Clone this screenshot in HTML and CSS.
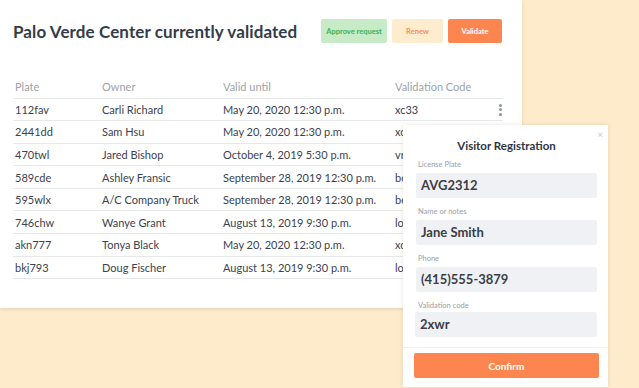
FILE: index.html
```html
<!DOCTYPE html>
<html>
<head>
<meta charset="utf-8">
<link rel="stylesheet" href="styles.css">
</head>
<body>
<div class="card">
  <div class="head">
    <h1 class="title">Palo Verde Center currently validated</h1>
    <div class="actions">
      <button class="btn btn-approve">Approve request</button>
      <button class="btn btn-renew">Renew</button>
      <button class="btn btn-validate">Validate</button>
    </div>
  </div>
  <table class="grid">
    <colgroup>
      <col class="c1"><col class="c2"><col class="c3"><col class="c4">
    </colgroup>
    <thead>
      <tr><th>Plate</th><th>Owner</th><th>Valid until</th><th>Validation Code</th></tr>
    </thead>
    <tbody>
      <tr><td>112fav</td><td>Carli Richard</td><td>May 20, 2020 12:30 p.m.</td><td class="code">xc33<span class="kebab"><i></i><i></i><i></i></span></td></tr>
      <tr><td>2441dd</td><td>Sam Hsu</td><td>May 20, 2020 12:30 p.m.</td><td class="code">xc45</td></tr>
      <tr><td>470twl</td><td>Jared Bishop</td><td>October 4, 2019 5:30 p.m.</td><td class="code">vr21</td></tr>
      <tr><td>589cde</td><td>Ashley Fransic</td><td>September 28, 2019 12:30 p.m.</td><td class="code">be87</td></tr>
      <tr><td>595wlx</td><td>A/C Company Truck</td><td>September 28, 2019 12:30 p.m.</td><td class="code">be92</td></tr>
      <tr><td>746chw</td><td>Wanye Grant</td><td>August 13, 2019 9:30 p.m.</td><td class="code">lo34</td></tr>
      <tr><td>akn777</td><td>Tonya Black</td><td>May 20, 2020 12:30 p.m.</td><td class="code">xc33</td></tr>
      <tr><td>bkj793</td><td>Doug Fischer</td><td>August 13, 2019 9:30 p.m.</td><td class="code">lo56</td></tr>
    </tbody>
  </table>
</div>

<div class="modal">
  <span class="close">×</span>
  <h2 class="modal-title">Visitor Registration</h2>
  <label class="lbl">License Plate</label>
  <div class="field">AVG2312</div>
  <label class="lbl">Name or notes</label>
  <div class="field">Jane Smith</div>
  <label class="lbl">Phone</label>
  <div class="field">(415)555-3879</div>
  <label class="lbl lbl-last">Validation code</label>
  <div class="field field-last">2xwr</div>
  <div class="footer">
    <button class="confirm">Confirm</button>
  </div>
</div>
</body>
</html>
```

FILE: styles.css
```css
* { box-sizing: border-box; }
html, body { margin: 0; padding: 0; }
body {
  width: 639px;
  height: 388px;
  overflow: hidden;
  background: #fdebcb;
  font-family: Lato, "Open Sans", sans-serif;
  color: #3d4450;
  position: relative;
}
.card {
  width: 522px;
  height: 308px;
  background: #fff;
  padding: 19px 20px 0 13px;
  box-shadow: 0 1px 3px rgba(150, 120, 80, 0.25);
}
.head {
  display: flex;
  align-items: center;
  justify-content: space-between;
  height: 24px;
}
.title {
  margin: 0;
  font-size: 17px;
  font-weight: 700;
  color: #343c48;
  letter-spacing: 0.1px;
}
.actions { display: flex; gap: 5px; }
.btn {
  border: 0;
  border-radius: 2px;
  height: 24px;
  font-family: Lato, sans-serif;
  font-size: 7.5px;
  font-weight: 700;
  padding: 0;
}
.btn-approve { width: 66px; background: #c6ebc6; color: #3bb15a; }
.btn-renew { width: 51px; background: #feecce; color: #f88c5c; }
.btn-validate { width: 54px; background: #fd8650; color: #fff; }

.grid {
  margin-top: 33px;
  width: 490px;
  border-collapse: collapse;
  table-layout: fixed;
  font-size: 11px;
}
.c1 { width: 89px; }
.c2 { width: 121px; }
.c3 { width: 172px; }
.c4 { width: 108px; }
.grid th {
  text-align: left;
  font-weight: 400;
  color: #9ca3ad;
  height: 22px;
  padding: 0 0 0 2px;
  border-bottom: 1px solid #e6e8eb;
}
.grid th:nth-child(2), .grid td:nth-child(2),
.grid th:nth-child(3), .grid td:nth-child(3),
.grid th:nth-child(4), .grid td:nth-child(4) { padding-left: 0; }
.grid td {
  height: 22.6px;
  padding: 0 0 0 2px;
  border-bottom: 1px solid #e6e8eb;
  white-space: nowrap;
  color: #3a4250;
}
.code { position: relative; }
.kebab {
  position: absolute;
  right: 1px;
  top: 5px;
  display: flex;
  flex-direction: column;
  gap: 1.5px;
}
.kebab i {
  display: block;
  width: 3px;
  height: 3px;
  border-radius: 50%;
  background: #8c95a2;
}

.modal {
  position: absolute;
  left: 403px;
  top: 125px;
  width: 205px;
  height: 262px;
  background: #fff;
  box-shadow: 0 0 4px rgba(120, 100, 70, 0.18);
  padding: 13px 11px 0 13px;
  display: flex;
  flex-direction: column;
}
.close {
  position: absolute;
  right: 5px;
  top: 3px;
  font-size: 10px;
  color: #c8ccd2;
}
.modal-title {
  margin: 0;
  text-align: center;
  font-size: 11.5px;
  font-weight: 700;
  color: #2f3540;
  line-height: 16px;
}
.lbl {
  display: block;
  font-size: 7.5px;
  color: #9a9ea4;
  line-height: 10px;
  margin: 6px 0 3px 2px;
}
.field + .lbl { margin-top: 9px; }
.lbl-last { margin-bottom: 1px; }
.field {
  height: 25px;
  flex: none;
  background: #f0f1f5;
  border-radius: 2px;
  font-size: 13px;
  font-weight: 700;
  color: #3b3f45;
  line-height: 25px;
  padding-left: 5px;
}
.field-last { margin-left: -1px; }
.footer {
  margin: 10px -11px 0 -13px;
  border-top: 1px solid #eef0f2;
  padding: 5px 9px 0 11px;
}
.confirm {
  width: 185px;
  height: 25px;
  border: 0;
  border-radius: 2px;
  background: #fd8650;
  color: #fff;
  font-family: Lato, sans-serif;
  font-size: 10px;
  font-weight: 700;
}
```
